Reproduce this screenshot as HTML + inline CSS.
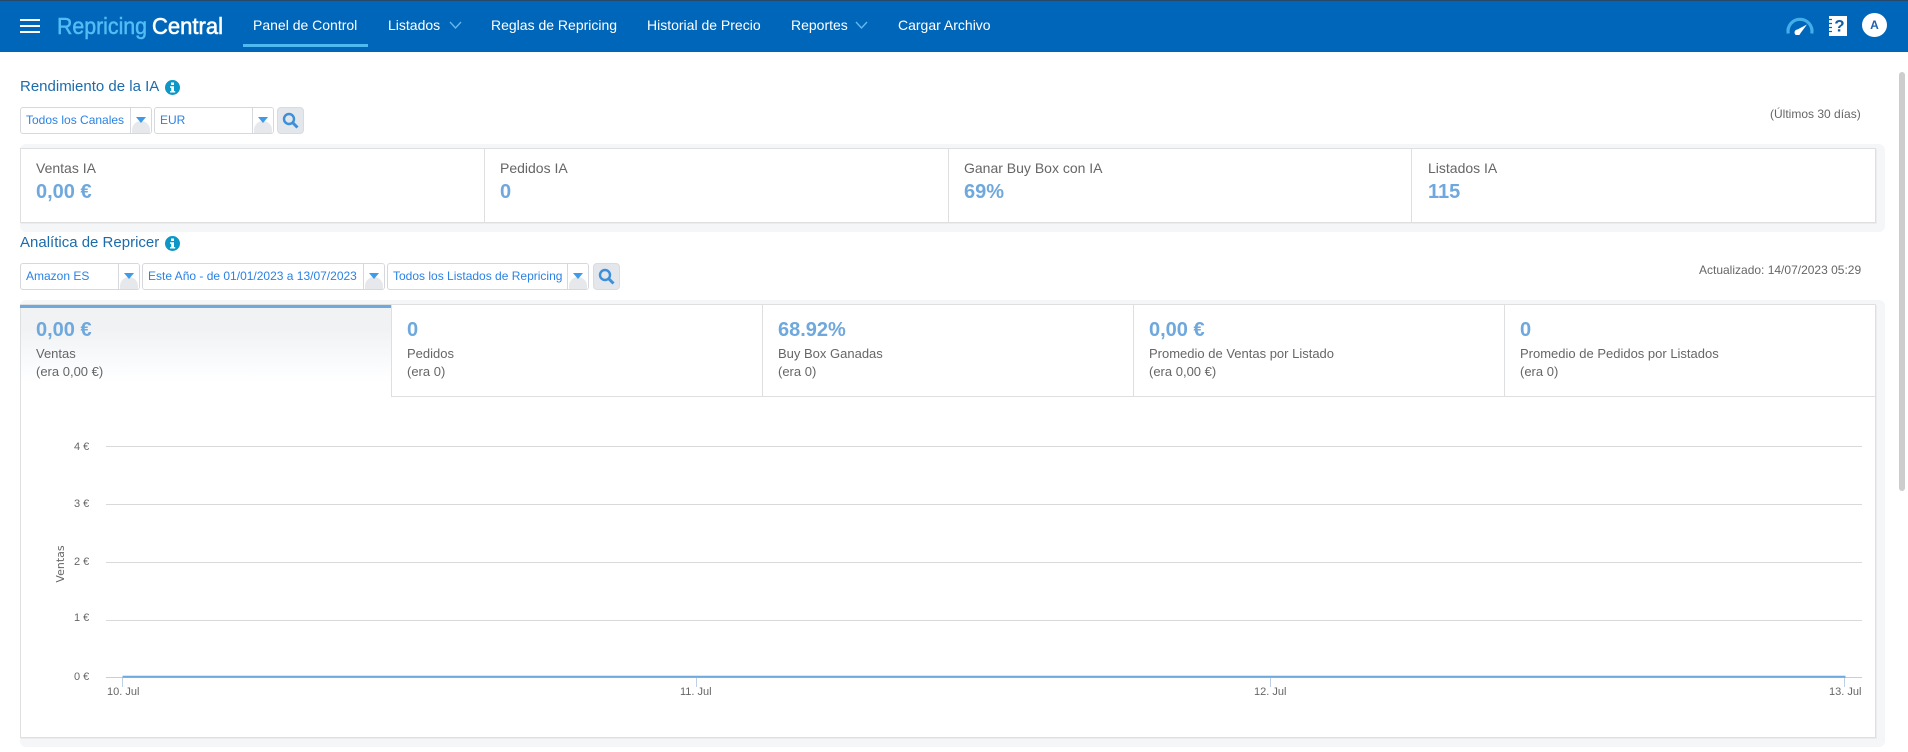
<!DOCTYPE html>
<html lang="es"><head><meta charset="utf-8"><title>Repricing Central</title>
<style>
html{margin:0;padding:0;width:1908px;height:752px;overflow:hidden;background:#fff}
body{margin:0;padding:0;width:1908px;height:752px;overflow:hidden;background:transparent;font-family:"Liberation Sans",Arial,sans-serif}
.a,.t{position:absolute}
.t{white-space:nowrap;line-height:20px;height:20px}
.nav{color:#fff;font-size:14px}
.h{color:#1c6cad;font-size:15px}
.sm{color:#666;font-size:12px}
.lb{color:#666;font-size:14px}
.tb{color:#666;font-size:13px}
.v{color:#6fa8dc;font-size:20px;font-weight:bold}
.card{position:absolute;background:#fff;border:1px solid #dedfe1;box-sizing:border-box;box-shadow:1px 1px 0 #ececee}
.shade{position:absolute;background:#f5f6f8;border-radius:6px}
.sel{position:absolute;height:27px;box-sizing:border-box;background:#fff;border:1px solid #d5d9de;border-radius:3px;color:#2a82e6;font-size:12px;line-height:24px;padding-left:5px;white-space:nowrap;overflow:hidden}
.arr{position:absolute;right:0;top:0;bottom:0;width:20px;border-left:1px solid #d5d9de;background:#fff}
.arr:before{content:"";position:absolute;left:1px;right:1px;bottom:0;height:12px;background:#e6e8eb;border-radius:9px 9px 0 0}
.arr:after{content:"";position:absolute;left:5px;top:9px;border-left:5px solid transparent;border-right:5px solid transparent;border-top:6px solid #3d9be9}
.btn{position:absolute;width:27px;height:27px;box-sizing:border-box;background:#e3e7eb;border:1px solid #d8dce0;border-radius:4px}
.div{position:absolute;width:1px;background:#dedfe1}
.ax{position:absolute;color:#666;font-size:11px;line-height:14px;white-space:nowrap}
</style></head>
<body>
<div class="a" style="left:0;top:0;width:1908px;height:52px;background:#0066b9"></div>
<div class="a" style="left:0;top:0;width:1908px;height:1px;background:#26496b"></div>
<div class="a" style="left:20px;top:19px;width:20px;height:2px;background:#fff"></div>
<div class="a" style="left:20px;top:25px;width:20px;height:2px;background:#fff"></div>
<div class="a" style="left:20px;top:31px;width:20px;height:2px;background:#fff"></div>
<svg class="a" style="left:50px;top:8px" width="180" height="36">
<text x="7" y="26" font-family="Liberation Sans" font-size="23" fill="#52bcf5" stroke="#52bcf5" stroke-width=".5" textLength="90" lengthAdjust="spacingAndGlyphs">Repricing</text>
<text x="102" y="26" font-family="Liberation Sans" font-size="23" fill="#fff" stroke="#fff" stroke-width=".6" textLength="71" lengthAdjust="spacingAndGlyphs">Central</text>
</svg>
<div class="t nav" style="left:253px;top:15px">Panel de Control</div>
<div class="a" style="left:243px;top:44px;width:125px;height:3px;background:#4fb9f2"></div>
<div class="t nav" style="left:388px;top:15px">Listados</div>
<svg class="a" style="left:449px;top:20px" width="14" height="10"><path d="M1 2l5.5 6L12 2" fill="none" stroke="#64b8ee" stroke-width="1.4"/></svg>
<div class="t nav" style="left:491px;top:15px">Reglas de Repricing</div>
<div class="t nav" style="left:647px;top:15px">Historial de Precio</div>
<div class="t nav" style="left:791px;top:15px">Reportes</div>
<svg class="a" style="left:855px;top:20px" width="14" height="10"><path d="M1 2l5.5 6L12 2" fill="none" stroke="#64b8ee" stroke-width="1.4"/></svg>
<div class="t nav" style="left:898px;top:15px">Cargar Archivo</div>

<svg class="a" style="left:1785px;top:15px" width="30" height="20">
<path d="M3.200 18.500A12 12 0 1 1 26.800 18.500" fill="none" stroke="#43aee9" stroke-width="3.2"/>
<path d="M10.500 15.500L22 9.500L14.500 19.500Z" fill="#fff"/><circle cx="12.500" cy="17.500" r="3" fill="#fff"/>
</svg>
<svg class="a" style="left:1828px;top:15px" width="20" height="22">
<rect x="1" y="1" width="18" height="20" fill="#fff"/>
<path d="M1 4.500h3M1 8.500h3M1 12.500h3M1 16.500h3" stroke="#0066b9" stroke-width="1.200"/>
<text x="11.500" y="16.500" text-anchor="middle" font-family="Liberation Sans" font-weight="bold" font-size="17" fill="#0e5fa8">?</text>
</svg>
<div class="a" style="left:1862px;top:13px;width:25px;height:24px;border-radius:50%;background:#fff;color:#1f5fb0;font-size:12px;font-weight:bold;line-height:24px;text-align:center">A</div>

<div class="t h" style="left:20px;top:77px">Rendimiento de la IA</div>
<svg class="a" style="left:165px;top:80px" width="15" height="15"><circle cx="7.500" cy="7.500" r="7.500" fill="#0d97c6"/><rect x="6" y="2.500" width="3" height="2.500" fill="#fff"/><path d="M5 6.300h4v4.700h1.200v1.500H5V11h1.200V7.800H5z" fill="#fff"/></svg>
<div class="sel" style="left:20px;top:107px;width:132px">Todos los Canales<div class="arr"></div></div>
<div class="sel" style="left:154px;top:107px;width:120px">EUR<div class="arr"></div></div>
<div class="btn" style="left:277px;top:107px"><svg width="25" height="25"><circle cx="11" cy="11" r="5" fill="none" stroke="#3d8fd8" stroke-width="2.400"/><path d="M14.500 14.500L19.500 19.500" stroke="#3d8fd8" stroke-width="3"/></svg></div>
<div class="t sm" style="left:1770px;top:104px">(Últimos 30 días)</div>

<div class="shade" style="left:20px;top:144px;width:1865px;height:88px"></div>
<div class="card" style="left:20px;top:148px;width:1856px;height:75px"></div>
<div class="div" style="left:484px;top:149px;height:73px"></div>
<div class="div" style="left:948px;top:149px;height:73px"></div>
<div class="div" style="left:1411px;top:149px;height:73px"></div>
<div class="t lb" style="left:36px;top:158px">Ventas IA</div><div class="t v" style="left:36px;top:182px">0,00 €</div>
<div class="t lb" style="left:500px;top:158px">Pedidos IA</div><div class="t v" style="left:500px;top:182px">0</div>
<div class="t lb" style="left:964px;top:158px">Ganar Buy Box con IA</div><div class="t v" style="left:964px;top:182px">69%</div>
<div class="t lb" style="left:1428px;top:158px">Listados IA</div><div class="t v" style="left:1428px;top:182px">115</div>

<div class="t h" style="left:20px;top:233px">Analítica de Repricer</div>
<svg class="a" style="left:165px;top:236px" width="15" height="15"><circle cx="7.500" cy="7.500" r="7.500" fill="#0d97c6"/><rect x="6" y="2.500" width="3" height="2.500" fill="#fff"/><path d="M5 6.300h4v4.700h1.200v1.500H5V11h1.200V7.800H5z" fill="#fff"/></svg>
<div class="sel" style="left:20px;top:263px;width:120px">Amazon ES<div class="arr"></div></div>
<div class="sel" style="left:142px;top:263px;width:243px">Este Año - de 01/01/2023 a 13/07/2023<div class="arr"></div></div>
<div class="sel" style="left:387px;top:263px;width:202px">Todos los Listados de Repricing<div class="arr"></div></div>
<div class="btn" style="left:593px;top:263px"><svg width="25" height="25"><circle cx="11" cy="11" r="5" fill="none" stroke="#3d8fd8" stroke-width="2.400"/><path d="M14.500 14.500L19.500 19.500" stroke="#3d8fd8" stroke-width="3"/></svg></div>
<div class="t sm" style="left:1699px;top:260px">Actualizado: 14/07/2023 05:29</div>

<div class="shade" style="left:20px;top:300px;width:1865px;height:447px"></div>
<div class="card" style="left:20px;top:304px;width:1856px;height:434px"></div>
<div class="a" style="left:21px;top:305px;width:370px;height:78px;background:linear-gradient(#f1f2f4 0,#f1f2f4 30%,#f7f9fb 65%,#fff 100%)"></div>
<div class="a" style="left:20px;top:305px;width:372px;height:3px;background:#6fa8dc"></div>
<div class="div" style="left:391px;top:305px;height:92px"></div>
<div class="div" style="left:762px;top:305px;height:92px"></div>
<div class="div" style="left:1133px;top:305px;height:92px"></div>
<div class="div" style="left:1504px;top:305px;height:92px"></div>
<div class="a" style="left:391px;top:396px;width:1484px;height:1px;background:#dedfe1"></div>

<div class="t v" style="left:36px;top:320px">0,00 €</div><div class="t tb" style="left:36px;top:344px">Ventas</div><div class="t tb" style="left:36px;top:362px">(era 0,00 €)</div>
<div class="t v" style="left:407px;top:320px">0</div><div class="t tb" style="left:407px;top:344px">Pedidos</div><div class="t tb" style="left:407px;top:362px">(era 0)</div>
<div class="t v" style="left:778px;top:320px">68.92%</div><div class="t tb" style="left:778px;top:344px">Buy Box Ganadas</div><div class="t tb" style="left:778px;top:362px">(era 0)</div>
<div class="t v" style="left:1149px;top:320px">0,00 €</div><div class="t tb" style="left:1149px;top:344px">Promedio de Ventas por Listado</div><div class="t tb" style="left:1149px;top:362px">(era 0,00 €)</div>
<div class="t v" style="left:1520px;top:320px">0</div><div class="t tb" style="left:1520px;top:344px">Promedio de Pedidos por Listados</div><div class="t tb" style="left:1520px;top:362px">(era 0)</div>

<svg class="a" style="left:0;top:0" width="1908" height="752">
<g stroke="#d9d9d9" stroke-width="1">
<path d="M106 446.500H1862M106 504.500H1862M106 562.500H1862M106 620.500H1862"/>
</g>
<path d="M106 677.500H1862" stroke="#c0d0e4"/>
<path d="M122.500 677V687M696.500 677V687M1270.500 677V687M1844.500 677V687" stroke="#c0d0e4"/>
<path d="M122.500 676.700H1845.500" stroke="#6fa8dc" stroke-width="2"/>
<text transform="translate(64 564) rotate(-90)" text-anchor="middle" font-family="DejaVu Sans" font-size="11" fill="#666">Ventas</text>
</svg>
<div class="ax" style="left:74px;top:440px">4 €</div>
<div class="ax" style="left:74px;top:497px">3 €</div>
<div class="ax" style="left:74px;top:555px">2 €</div>
<div class="ax" style="left:74px;top:611px">1 €</div>
<div class="ax" style="left:74px;top:670px">0 €</div>
<div class="ax" style="left:107px;top:685px">10. Jul</div>
<div class="ax" style="left:680px;top:685px">11. Jul</div>
<div class="ax" style="left:1254px;top:685px">12. Jul</div>
<div class="ax" style="left:1829px;top:685px">13. Jul</div>

<div class="a" style="left:1899px;top:72px;width:6px;height:419px;background:#cdcdcd;border-radius:3px"></div>
</body></html>
